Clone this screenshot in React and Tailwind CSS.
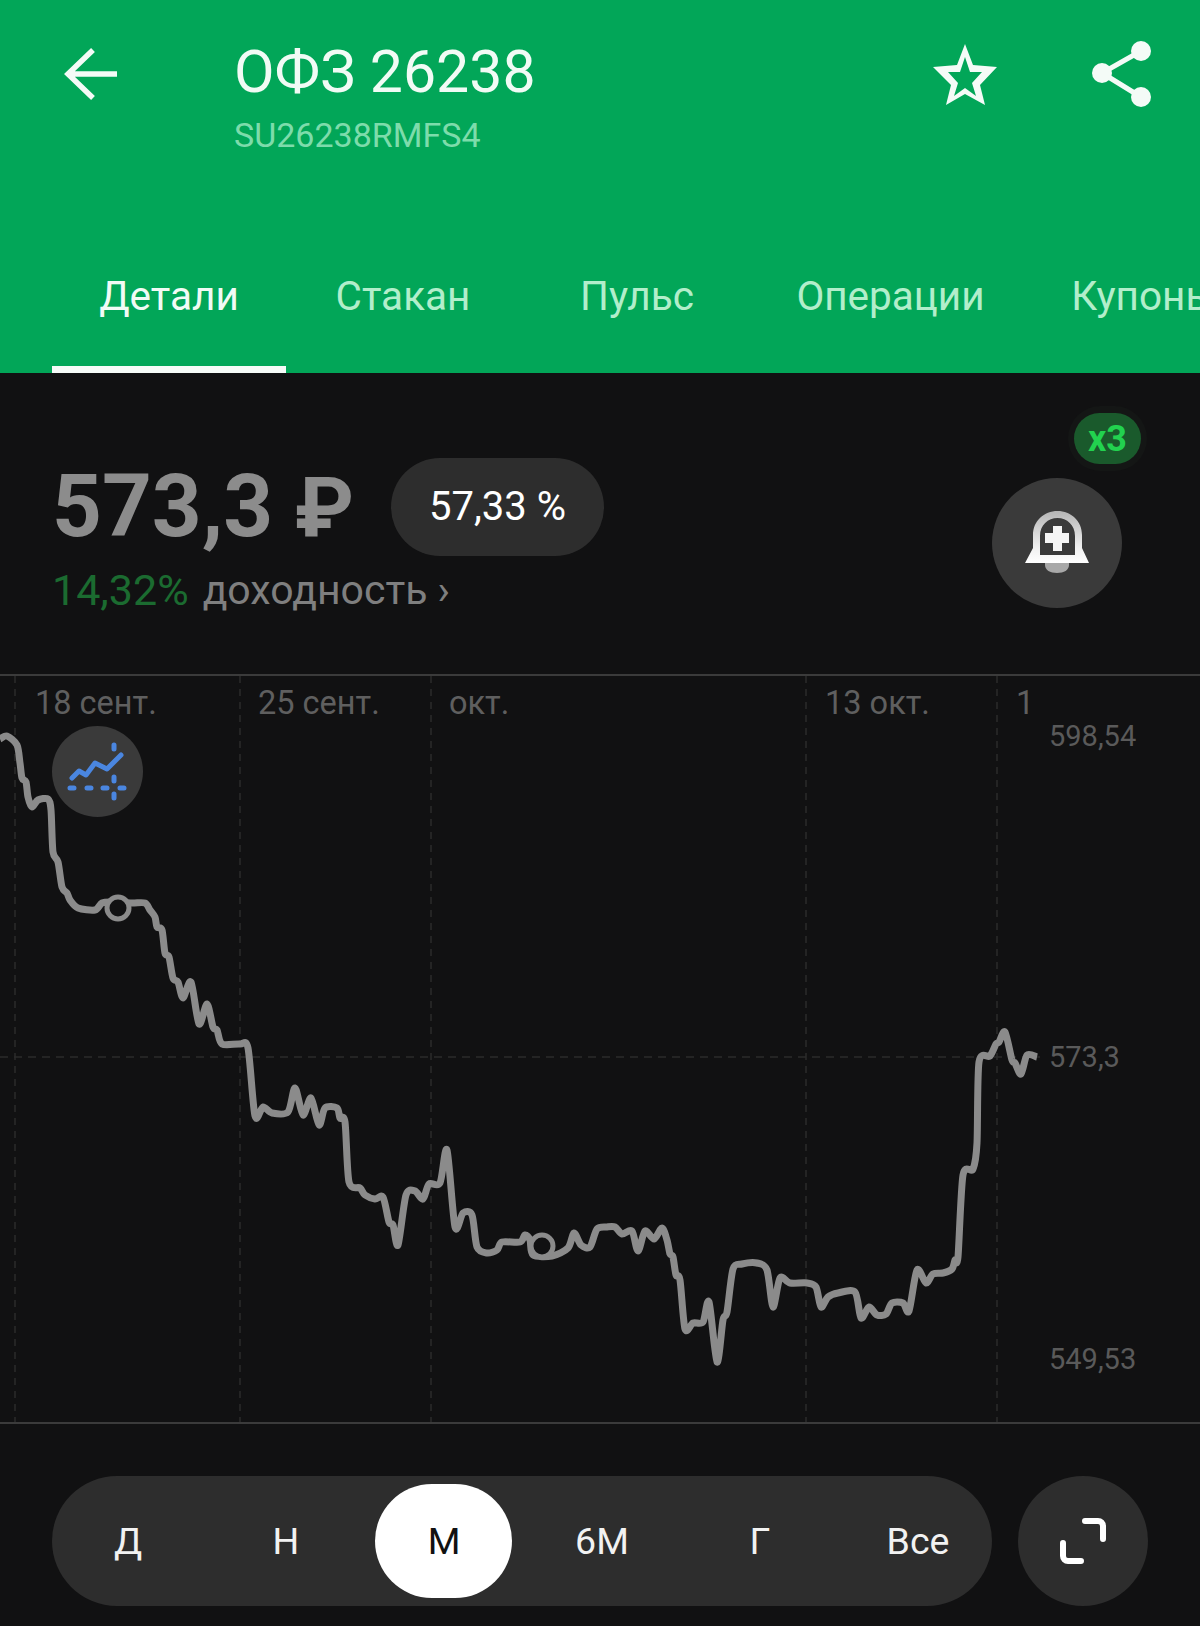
import React from 'react'

// chart line in page coordinates (y is page y, chart svg starts at y=676)
const LINE = [
  [0,739],[7,736],[17,745],[20,763],[22,778],[26,782],[28,797],[32,807],[38,800],[48,799],[51,810],[53,852],[58,862],[62,887],[67,893],[70,900],[78,908],[95,910],[102,903],[112,902],[132,903],[145,903],[150,910],[155,917],[157,927],[162,930],[165,953],[169,957],[173,978],[178,982],[183,998],[191,982],[199,1024],[207,1004],[213,1027],[217,1030],[222,1044],[240,1044],[248,1048],[255,1116],[263,1107],[272,1113],[288,1112],[295,1088],[303,1115],[311,1098],[319,1125],[325,1108],[337,1108],[340,1118],[345,1122],
  [349,1182],[360,1188],[365,1195],[375,1199],[383,1197],[389,1222],[393,1225],[398,1245],[406,1195],[415,1191],[423,1199],[429,1184],[440,1183],[447,1150],[455,1227],[463,1213],[472,1215],[477,1247],[487,1253],[497,1250],[502,1242],[520,1242],[525,1235],[530,1240],[533,1255],[552,1256],[568,1248],[574,1233],[581,1245],[590,1247],[597,1229],[607,1227],[615,1227],[622,1234],[632,1231],[638,1251],[645,1231],[654,1239],[662,1228],[667,1240],[670,1254],[673,1257],[676,1275],[680,1280],[685,1329],[693,1323],[703,1322],[709,1302],[717,1362],[723,1320],[727,1312],[733,1269],[742,1264],[757,1263],
  [767,1270],[773,1307],[780,1278],[790,1283],[807,1283],[816,1287],[821,1307],[828,1297],[838,1293],[855,1292],[861,1318],[869,1307],[877,1315],[886,1314],[892,1303],[903,1303],[909,1311],[917,1270],[926,1283],[933,1274],[943,1273],[952,1269],[955,1260],[958,1257],[963,1175],[973,1169],[977,1143],[979,1062],[990,1056],[996,1044],[999,1042],[1005,1032],[1012,1060],[1015,1063],[1021,1074],[1027,1055],[1037,1057],
]

function smooth(pts) {
  const k = 0.14
  let d = `M${pts[0][0]} ${pts[0][1]}`
  for (let i = 0; i < pts.length - 1; i++) {
    const p0 = pts[i - 1] || pts[i]
    const p1 = pts[i]
    const p2 = pts[i + 1]
    const p3 = pts[i + 2] || p2
    const c1x = p1[0] + (p2[0] - p0[0]) * k
    const c1y = p1[1] + (p2[1] - p0[1]) * k
    const c2x = p2[0] - (p3[0] - p1[0]) * k
    const c2y = p2[1] - (p3[1] - p1[1]) * k
    d += ` C${c1x.toFixed(1)} ${c1y.toFixed(1)} ${c2x.toFixed(1)} ${c2y.toFixed(1)} ${p2[0]} ${p2[1]}`
  }
  return d
}

const TABS = [
  { label: 'Детали', active: true, cls: 'w-[234px]' },
  { label: 'Стакан', cls: 'w-[234px]' },
  { label: 'Пульс', cls: 'w-[234px]' },
  { label: 'Операции', cls: 'w-[273px]' },
  { label: 'Купоны', cls: 'w-[234px]' },
]

const PERIODS = ['Д', 'Н', 'М', '6М', 'Г', 'Все']

function Header() {
  return (
    <div className="h-[373px] shrink-0 bg-[#02a658] flex flex-col">
      <div className="flex items-start h-[271px]">
        <svg width="60" height="60" viewBox="0 0 60 60" className="ml-[62px] mt-[44px] shrink-0" fill="none" stroke="#f4fbf7" strokeWidth="5.5">
          <path d="M55 30H7M31 6 6 30l25 24" />
        </svg>
        <div className="ml-[112px] mt-[42px] flex flex-col">
          <div className="text-[59px] leading-[60px] text-[#f1fbf5]">ОФЗ 26238</div>
          <div className="mt-[13px] text-[34px] leading-[40px] text-[#7ddcab]">SU26238RMFS4</div>
        </div>
        {/* star and share are drawn in page coordinates */}
        <svg width="72" height="72" viewBox="929 40 72 72" className="ml-auto mt-[40px] shrink-0" fill="#f4fbf7">
          <path
            fillRule="evenodd"
            d="M965 44 973 65 997 67 980 85 985 105 965 94 946 105 951 85 933 67 957 65ZM965 57 960 72 948 72 958 83 954 96 965 88 976 96 972 83 982 72 970 72Z"
          />
        </svg>
        <svg width="65" height="72" viewBox="1090 38 65 72" className="ml-[89px] mr-[45px] mt-[38px] shrink-0" fill="#f4fbf7">
          <path d="M1141 51 1102 73l39 24" fill="none" stroke="#f4fbf7" strokeWidth="5" />
          <circle cx="1141" cy="51" r="10" />
          <circle cx="1102" cy="73" r="10" />
          <circle cx="1141" cy="97" r="10" />
        </svg>
      </div>
      <div className="flex h-[102px] overflow-hidden pl-[52px]">
        {TABS.map(t => (
          <div
            key={t.label}
            className={`${t.cls} shrink-0 flex flex-col justify-between items-center`}
          >
            <div className={`pt-[2px] text-[40.500px] leading-[46px] ${t.active ? 'text-[#f1fbf5]' : 'text-[#b2eecb]'}`}>{t.label}</div>
            {t.active && <div className="h-[7px] w-full bg-[#f6fbf8]" />}
          </div>
        ))}
      </div>
    </div>
  )
}

function BellIcon() {
  return (
    <svg width="70" height="70" viewBox="1022 510 70 70">
      <defs>
        <linearGradient id="bellGrad" x1="0" y1="0" x2="0" y2="1">
          <stop offset="0%" stopColor="#b5b5b5" />
          <stop offset="70%" stopColor="#f0f0f0" />
          <stop offset="100%" stopColor="#ffffff" />
        </linearGradient>
      </defs>
      <path d="M1045 565h24v2c0 5-5 8-12 8s-12-3-12-8Z" fill="#a8a8a8" />
      <path
        fillRule="evenodd"
        fill="url(#bellGrad)"
        d="M1025 565 1033 550V537C1033 523 1044 513 1057.500 513 1071 513 1082 523 1082 537V550L1089 565ZM1040 557H1075V538C1075 527 1067 520 1057.500 520 1048 520 1040 527 1040 538Z"
      />
      <path d="M1053 528h9v7h7v10h-7v8h-9v-8h-8v-10h8Z" fill="#f5f5f5" />
    </svg>
  )
}

function PriceBlock() {
  return (
    <div className="relative h-[301px] shrink-0 flex items-start pl-[52px]">
      <div className="flex flex-col pt-[84px]">
        <div className="flex items-center">
          <div className="text-[87px] leading-[98px] font-bold text-[#8c8c8c]">573,3 <span className="text-[84px]">₽</span></div>
          <div className="ml-[37px] h-[98px] w-[213px] rounded-full bg-[#2d2d2d] flex items-center justify-center text-[40px] text-white">57,33 %</div>
        </div>
        <div className="mt-[11px] flex items-center text-[41px] leading-[44px]">
          <span className="text-[43px] text-[#1b6b30]">14,32%</span>
          <span className="ml-[14px] text-[#7f7f7f]">доходность ›</span>
        </div>
      </div>
      <div className="ml-auto mr-[78px] mt-[105px] size-[130px] rounded-full bg-[#3a3a3a] flex items-center justify-center">
        <BellIcon />
      </div>
      <div className="absolute left-[1068px] top-[33px] h-[65px] w-[79px] rounded-full bg-[#141615] flex items-center justify-center">
        <div className="h-[51px] w-[67px] rounded-full bg-[#1a5a2c] flex items-center justify-center text-[36px] font-bold text-[#22d24f]">x3</div>
      </div>
    </div>
  )
}

function Chart() {
  const grid = [15, 240, 431, 806, 997]
  const dates = [
    { t: '18 сент.', c: 'left-[35px]' },
    { t: '25 сент.', c: 'left-[258px]' },
    { t: 'окт.', c: 'left-[449px]' },
    { t: '13 окт.', c: 'left-[825px]' },
    { t: '1', c: 'left-[1016px]' },
  ]
  return (
    <div className="relative h-[750px] shrink-0 border-y-2 border-[#3b3b3b]">
      <svg width="1200" height="746" viewBox="0 676 1200 746" fill="none" className="block">
        {grid.map(x => (
          <line key={x} x1={x} x2={x} y1="676" y2="1422" stroke="#2b2b2b" strokeWidth="1.500" strokeDasharray="7 6" />
        ))}
        <line x1="0" x2="1040" y1="1057" y2="1057" stroke="#2b2b2b" strokeWidth="1.500" strokeDasharray="8 6" />
        <path d={smooth(LINE)} stroke="#8b8b8b" strokeWidth="7" strokeLinejoin="round" />
        <circle cx="118" cy="908" r="11" stroke="#8b8b8b" strokeWidth="5" fill="#111112" />
        <circle cx="542" cy="1246" r="11" stroke="#8b8b8b" strokeWidth="5" fill="#111112" />
      </svg>
      {dates.map(d => (
        <div key={d.t} className={`absolute top-[7px] text-[32.500px] leading-[40px] text-[#5f5f5f] ${d.c}`}>{d.t}</div>
      ))}
      <div className="absolute left-[1049px] top-[43px] text-[29px] leading-[34px] text-[#5a5a5a]">598,54</div>
      <div className="absolute left-[1049px] top-[364px] text-[29px] leading-[34px] text-[#5a5a5a]">573,3</div>
      <div className="absolute left-[1049px] top-[666px] text-[29px] leading-[34px] text-[#5a5a5a]">549,53</div>
      <div className="absolute left-[52px] top-[50px] size-[91px] rounded-full bg-[#3a3a3a]">
        <svg width="91" height="91" viewBox="52 726 91 91" fill="none" stroke="#4a86e0" strokeLinecap="round">
          <path d="M72 778 79 771 86 775 95 763 107 769 121 755" strokeWidth="5" strokeLinejoin="round" />
          <path d="M70 788h4M87 788h4M103 788h4M120 788h4M114 745v4M114 777v4M114 794v4" strokeWidth="5" />
        </svg>
      </div>
    </div>
  )
}

function Periods() {
  return (
    <div className="flex items-start pl-[52px] pt-[52px]">
      <div className="w-[940px] h-[130px] rounded-full bg-[#2d2d2d] flex items-center">
        <div className="flex -ml-[4px]">
          {PERIODS.map(p => (
            <div key={p} className="w-[158px] shrink-0 flex justify-center">
              <div className={`w-[137px] h-[114px] rounded-full flex items-center justify-center pl-[2px] text-[37.500px] ${p === 'М' ? 'bg-white text-[#111]' : 'text-[#f2f2f2]'}`}>{p}</div>
            </div>
          ))}
        </div>
      </div>
      <div className="ml-[26px] size-[130px] rounded-full bg-[#2d2d2d] flex items-center justify-center">
        <svg width="50" height="50" viewBox="0 0 50 50" fill="none" stroke="#fff" strokeWidth="6" strokeLinecap="round">
          <path d="M27 5h13a5 5 0 0 1 5 5v13" />
          <path d="M5 27v13a5 5 0 0 0 5 5h13" />
        </svg>
      </div>
    </div>
  )
}

export default function App() {
  return (
    <div className="w-[1200px] h-[1626px] bg-[#111112] overflow-hidden flex flex-col font-['Roboto',sans-serif]">
      <Header />
      <PriceBlock />
      <Chart />
      <Periods />
    </div>
  )
}
